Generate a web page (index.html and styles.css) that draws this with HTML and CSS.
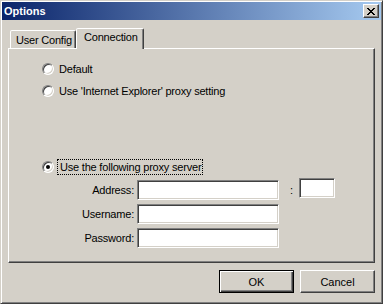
FILE: index.html
```html
<!DOCTYPE html>
<html lang="en">
<head>
    <meta charset="UTF-8">
    <title>Options</title>
    <link rel="stylesheet" href="styles.css">
</head>
<body>
    <div class="window">
        <!-- Title bar -->
        <div class="titlebar">
            <span class="title">Options</span>
            <button class="close-btn" aria-label="Close">
                <svg width="8" height="7" viewBox="0 0 8 7">
                    <path d="M0 0h2v1h1v1h2v-1h1v-1h2v1h-1v1h-1v1h-1v1h1v1h1v1h1v1h-2v-1h-1v-1h-2v1h-1v1h-2v-1h1v-1h1v-1h1v-1h-1v-1h-1v-1h-1z" fill="#000"/>
                </svg>
            </button>
        </div>

        <div class="body">
            <!-- Tabs -->
            <div class="tabs">
                <div class="tab">User Config</div>
                <div class="tab tab-active">Connection</div>
            </div>

            <!-- Tab panel -->
            <div class="panel">
                <div class="radio-row first">
                    <span class="radio"></span>
                    <span class="radio-text">Default</span>
                </div>
                <div class="radio-row">
                    <span class="radio"></span>
                    <span class="radio-text">Use 'Internet Explorer' proxy setting</span>
                </div>
                <div class="radio-row proxy">
                    <span class="radio checked"></span>
                    <span class="radio-text focused">Use the following proxy server</span>
                </div>

                <div class="fields">
                    <label class="field-label">Address:</label>
                    <div class="input"></div>
                    <span class="colon">:</span>
                    <div class="input port"></div>

                    <label class="field-label">Username:</label>
                    <div class="input"></div>
                    <span></span>
                    <span></span>

                    <label class="field-label">Password:</label>
                    <div class="input"></div>
                </div>
            </div>

            <!-- Buttons -->
            <div class="buttons">
                <button class="btn btn-default">OK</button>
                <button class="btn">Cancel</button>
            </div>
        </div>
    </div>
</body>
</html>
```

FILE: styles.css
```css
body {
    margin: 0;
    background-color: #d4d0c8;
    font-family: "Liberation Sans", Arial, sans-serif;
    font-size: 11px;
    letter-spacing: -0.2px;
    color: #000;
}

.window {
    width: 383px;
    height: 304px;
    box-sizing: border-box;
    padding: 1px;
    border: 1px solid;
    border-color: #d4d0c8 #404040 #404040 #d4d0c8;
    box-shadow: inset 1px 1px #fff, inset -1px -1px #808080;
    background-color: #d4d0c8;
    display: flex;
    flex-direction: column;
}

/* Title bar */
.titlebar {
    height: 18px;
    display: flex;
    align-items: center;
    justify-content: space-between;
    padding: 0 2px;
    background: linear-gradient(to right, #0a246a, #a6caf0);
}

.title {
    color: #fff;
    font-weight: bold;
    font-size: 11px;
    letter-spacing: 0;
}

.close-btn {
    width: 16px;
    height: 14px;
    padding: 0;
    box-sizing: border-box;
    border: 1px solid;
    border-color: #fff #404040 #404040 #fff;
    box-shadow: inset -1px -1px #808080;
    background-color: #d4d0c8;
    display: flex;
    align-items: center;
    justify-content: center;
}

.close-btn svg {
    display: block;
    margin-left: -1px;
}

/* Main body */
.body {
    flex: 1;
    padding: 8px 6px 0 6px;
    display: flex;
    flex-direction: column;
}

.tabs {
    height: 20px;
    display: flex;
    align-items: flex-end;
    padding-left: 2px;
}

.tab {
    height: 18px;
    box-sizing: border-box;
    padding: 3px 0 0 5px;
    width: 66px;
    white-space: nowrap;
    border: 1px solid;
    border-bottom: none;
    border-color: #fff #404040 transparent #fff;
    border-radius: 2px 2px 0 0;
    box-shadow: inset -1px 0 #808080;
    background-color: #d4d0c8;
}

.tab-active {
    width: 68px;
    height: 21px;
    padding: 2px 0 0 7px;
    margin-bottom: -1px;
    position: relative;
    z-index: 1;
}

.panel {
    height: 215px;
    box-sizing: border-box;
    border: 1px solid;
    border-color: #fff #404040 #404040 #fff;
    box-shadow: inset -1px -1px #808080;
    padding: 12px 0 0 33px;
}

.radio-row {
    height: 16px;
    display: flex;
    align-items: center;
    margin-top: 6px;
}

.radio-row.first {
    margin-top: 0;
}

.radio-row.proxy {
    margin-top: 60px;
}

.radio {
    width: 12px;
    height: 12px;
    box-sizing: border-box;
    border-radius: 50%;
    border: 1px solid;
    border-color: #808080 #fff #fff #808080;
    box-shadow: inset 1px 1px #404040, inset -1px -1px #d4d0c8;
    background-color: #fff;
    display: flex;
    align-items: center;
    justify-content: center;
    margin-right: 5px;
}

.radio.checked::after {
    content: "";
    width: 4px;
    height: 4px;
    border-radius: 50%;
    background-color: #000;
}

.radio-text.focused {
    outline: 1px dotted #000;
    padding: 1px 1px 1px 2px;
    margin-left: -1px;
}

/* Proxy fields */
.fields {
    margin-top: 5px;
    display: grid;
    grid-template-columns: 92px 142px 14px 36px;
    grid-auto-rows: 20px;
    column-gap: 3px;
    row-gap: 4px;
    align-items: center;
}

.field-label {
    text-align: right;
}

.input {
    height: 20px;
    box-sizing: border-box;
    border: 1px solid;
    border-color: #808080 #fff #fff #808080;
    box-shadow: inset 1px 1px #404040, inset -1px -1px #d4d0c8;
    background-color: #fff;
}

.input.port {
    margin-top: -4px;
}

.colon {
    padding-left: 8px;
}

/* Buttons */
.buttons {
    margin-top: 7px;
    display: flex;
    justify-content: flex-end;
    gap: 6px;
}

.btn {
    width: 75px;
    height: 23px;
    box-sizing: border-box;
    padding: 0;
    font-family: "Liberation Sans", Arial, sans-serif;
    font-size: 11px;
    color: #000;
    border: 1px solid;
    border-color: #fff #404040 #404040 #fff;
    box-shadow: inset -1px -1px #808080;
    background-color: #d4d0c8;
}

.btn-default {
    border: 1px solid #000;
    box-shadow: inset 1px 1px #fff, inset -1px -1px #404040, inset -2px -2px #808080;
}
```
